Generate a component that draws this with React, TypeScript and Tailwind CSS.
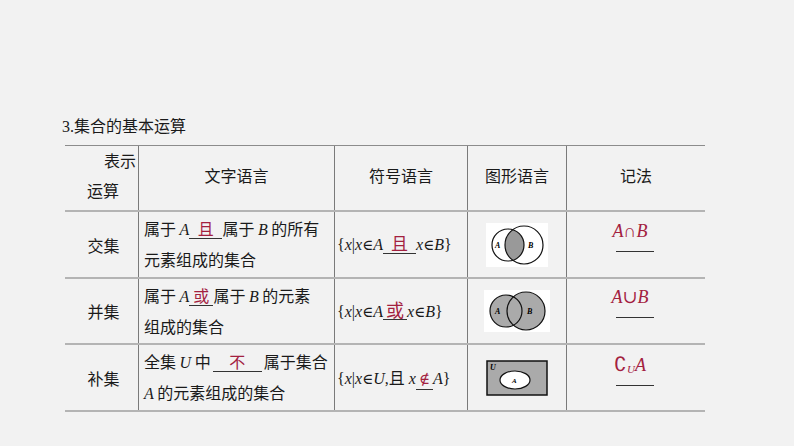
import React from "react";

const cjk = "font-['Noto_Sans_CJK_SC','Noto_Sans',sans-serif]";
const serif = "font-['Liberation_Serif','DejaVu_Serif',serif]";
const red = "text-[#a3213f]";

const M = ({ children }: { children: React.ReactNode }) => (
    <span className={`${serif} italic`}>{children}</span>
);

const Blank = ({ w, children }: { w: string; children: React.ReactNode }) => (
    <span className={`inline-block ${w} border-b border-[#333] text-center leading-[20px] ${red}`}>
        {children}
    </span>
);

const Cell = ({ className = "", children }: { className?: string; children?: React.ReactNode }) => (
    <div className={`flex items-center ${className}`}>{children}</div>
);

const VennIntersect = () => (
    <svg width="62" height="44" viewBox="0 0 62 44">
        <rect x="0" y="0" width="62" height="44" fill="#fff" />
        <defs>
            <clipPath id="lc">
                <circle cx="22" cy="22" r="16" />
            </clipPath>
        </defs>
        <circle cx="38" cy="22" r="19" fill="#999" clipPath="url(#lc)" />
        <circle cx="22" cy="22" r="16" fill="none" stroke="#111" strokeWidth="1.2" />
        <circle cx="38" cy="22" r="19" fill="none" stroke="#111" strokeWidth="1.2" />
        <text x="9" y="25" fontSize="8" fontStyle="italic" fontWeight="bold" fontFamily="Liberation Serif">A</text>
        <text x="42" y="25" fontSize="8" fontStyle="italic" fontWeight="bold" fontFamily="Liberation Serif">B</text>
    </svg>
);

const VennUnion = () => (
    <svg width="66" height="42" viewBox="0 0 66 42">
        <rect x="0" y="0" width="66" height="42" fill="#fff" />
        <circle cx="22" cy="21" r="16" fill="#aaa" />
        <circle cx="42" cy="21" r="19" fill="#aaa" />
        <circle cx="22" cy="21" r="16" fill="none" stroke="#111" strokeWidth="1.2" />
        <circle cx="42" cy="21" r="19" fill="none" stroke="#111" strokeWidth="1.2" />
        <text x="11" y="24" fontSize="8" fontStyle="italic" fontWeight="bold" fontFamily="Liberation Serif">A</text>
        <text x="43" y="24" fontSize="8" fontStyle="italic" fontWeight="bold" fontFamily="Liberation Serif">B</text>
    </svg>
);

const VennComplement = () => (
    <svg width="62" height="36" viewBox="0 0 62 36">
        <rect x="1" y="1" width="60" height="34" fill="#aaa" stroke="#111" strokeWidth="1.5" />
        <ellipse cx="29" cy="20" rx="15" ry="9" fill="#fff" stroke="#111" strokeWidth="1.2" />
        <text x="4" y="10" fontSize="8" fontStyle="italic" fontWeight="bold" fontFamily="Liberation Serif">U</text>
        <text x="26" y="23" fontSize="7" fontStyle="italic" fontWeight="bold" fontFamily="Liberation Serif">A</text>
    </svg>
);

const Notation = ({ children }: { children: React.ReactNode }) => (
    <div className="flex w-full flex-col items-center">
        <span className={`${serif} italic text-[18px] leading-[22px] ${red} -ml-[12px]`}>{children}</span>
        <span className="mt-[9px] -ml-[2px] block h-px w-[38px] bg-[#333]" />
    </div>
);

const Ele = () => <span className="font-['DejaVu_Serif',serif] text-[15px]">∈</span>;

export default function App() {
    const grid = "grid grid-cols-[74px_196px_133px_99px_138px] border-b-2 border-[#b4b4b4]";
    const vline = "border-r border-[#7a7a7a]";
    const textCell = `${vline} flex items-start pl-[5px] pt-[1px]`;
    return (
        <div className={`w-[794px] h-[446px] bg-[#f2f2f2] ${cjk} text-[#1a1a1a]`}>
            <div className="pt-[114px] pl-[62px] text-[16px] leading-[22px]">
                <span className={serif}>3.</span>集合的基本运算
            </div>
            <div className="mt-[7px] ml-[65px] w-[640px] border-t border-[#8c8c8c] text-[16px]">
                <div className={`${grid} h-[66px]`}>
                    <div className={`${vline} flex flex-col pt-[2px]`}>
                        <span className="self-end pr-[2px] leading-[24px]">表示</span>
                        <span className="pl-[22px] pt-[6px] leading-[24px]">运算</span>
                    </div>
                    <Cell className={`${vline} justify-center pb-[6px]`}>文字语言</Cell>
                    <Cell className={`${vline} justify-center pb-[6px]`}>符号语言</Cell>
                    <Cell className={`${vline} justify-center pb-[6px]`}>图形语言</Cell>
                    <Cell className="justify-center pb-[6px]">记法</Cell>
                </div>

                <div className={`${grid} h-[67px]`}>
                    <Cell className={`${vline} justify-center pl-[4px]`}>交集</Cell>
                    <div className={textCell}>
                        <div className="leading-[31px]">
                            <div className="h-[31px]">
                                属于 <M>A</M>
                                <Blank w="w-[33px]">且</Blank>属于 <M>B</M> 的所有
                            </div>
                            <div>元素组成的集合</div>
                        </div>
                    </div>
                    <Cell className={`${vline} pl-[2px] ${serif} text-[16px]`}>
                        <span>
                            {"{"}
                            <i>x</i>|<i>x</i>
                            <Ele />
                            <i>A</i>
                            <span className={`inline-block w-[33px] border-b border-[#333] text-center leading-[20px] ${cjk} text-[17px] ${red}`}>且</span>
                            <i>x</i>
                            <Ele />
                            <i>B</i>
                            {"}"}
                        </span>
                    </Cell>
                    <Cell className={`${vline} justify-center`}>
                        <VennIntersect />
                    </Cell>
                    <Cell className="justify-center pb-[18px]">
                        <Notation>A∩B</Notation>
                    </Cell>
                </div>

                <div className={`${grid} h-[66px]`}>
                    <Cell className={`${vline} justify-center pl-[4px]`}>并集</Cell>
                    <div className={textCell}>
                        <div className="leading-[31px]">
                            <div className="h-[31px]">
                                属于 <M>A</M>
                                <Blank w="w-[24px]">或</Blank>属于 <M>B</M> 的元素
                            </div>
                            <div>组成的集合</div>
                        </div>
                    </div>
                    <Cell className={`${vline} pl-[2px] ${serif} text-[16px]`}>
                        <span>
                            {"{"}
                            <i>x</i>|<i>x</i>
                            <Ele />
                            <i>A</i>
                            <span className={`inline-block w-[24px] border-b border-[#333] text-center leading-[20px] ${cjk} text-[18px] ${red}`}>或</span>
                            <i>x</i>
                            <Ele />
                            <i>B</i>
                            {"}"}
                        </span>
                    </Cell>
                    <Cell className={`${vline} justify-center`}>
                        <VennUnion />
                    </Cell>
                    <Cell className="justify-center pb-[18px]">
                        <Notation>A∪B</Notation>
                    </Cell>
                </div>

                <div className={`${grid} h-[67px]`}>
                    <Cell className={`${vline} justify-center pl-[4px]`}>补集</Cell>
                    <div className={textCell}>
                        <div className="leading-[31px]">
                            <div className="h-[31px]">
                                全集 <M>U</M> 中
                                <Blank w="w-[49px] mx-[2px]">不</Blank>属于集合
                            </div>
                            <div>
                                <M>A</M> 的元素组成的集合
                            </div>
                        </div>
                    </div>
                    <Cell className={`${vline} pl-[2px] ${serif} text-[16px]`}>
                        <span>
                            {"{"}
                            <i>x</i>|<i>x</i>
                            <Ele />
                            <i>U</i>,<span className={`${cjk} text-[16px]`}>且</span> <i>x</i>
                            <span className={`inline-block w-[17px] border-b border-[#333] text-center leading-[20px] font-['DejaVu_Serif',serif] text-[15px] ${red}`}>∉</span>
                            <i>A</i>
                            {"}"}
                        </span>
                    </Cell>
                    <Cell className={`${vline} justify-center`}>
                        <VennComplement />
                    </Cell>
                    <Cell className="justify-center pb-[18px]">
                        <Notation>
                            <span className={`not-italic ${cjk} text-[20px]`}>∁</span>
                            <sub className="text-[11px]">U</sub>A
                        </Notation>
                    </Cell>
                </div>
            </div>
        </div>
    );
}
